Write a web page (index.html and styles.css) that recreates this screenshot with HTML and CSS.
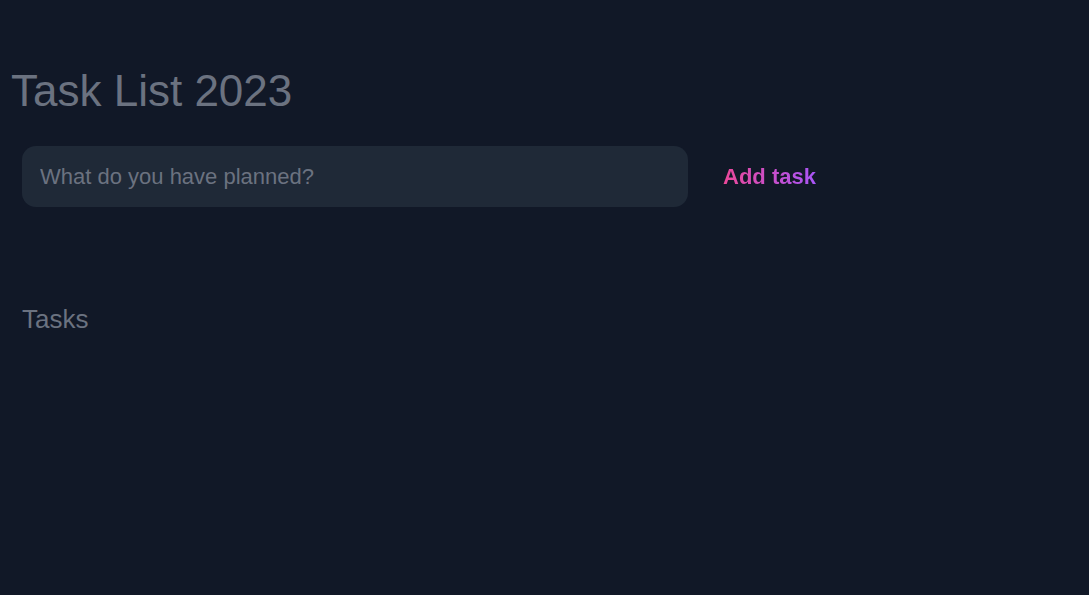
FILE: index.html
```html
<!DOCTYPE html>
<html lang="en">
<head>
<meta charset="utf-8">
<title>Task List 2023</title>
<link rel="stylesheet" href="styles.css">
</head>
<body>
<main class="app">
  <h1 class="title">Task List 2023</h1>
  <form class="new-task">
    <input class="task-input" type="text" placeholder="What do you have planned?">
    <button class="add-btn" type="button"><span class="grad">Add task</span></button>
  </form>
  <section class="tasks">
    <h2 class="tasks-title">Tasks</h2>
  </section>
</main>
</body>
</html>
```
FILE: styles.css
```css
* { box-sizing: border-box; }
html, body { margin: 0; padding: 0; background: #111827; height: 100%; }
body { font-family: "Liberation Sans", Arial, sans-serif; color: #6b7280; }
.app { padding-top: 67px; }
.title {
  margin: 0;
  padding-left: 11px;
  font-size: 44px;
  line-height: 48px;
  font-weight: 400;
  color: #6b7280;
}
.new-task {
  display: flex;
  align-items: center;
  margin: 31px 0 0 22px;
  gap: 35px;
}
.task-input {
  width: 666px;
  height: 61px;
  border: none;
  outline: none;
  border-radius: 14px;
  background: #1f2937;
  color: #d1d5db;
  padding: 0 18px;
  font-family: inherit;
  font-size: 22px;
}
.task-input::placeholder { color: #6b7280; }
.add-btn {
  background: none;
  border: none;
  padding: 0;
  font-family: inherit;
  font-size: 22px;
  font-weight: 700;
  line-height: 26px;
  cursor: pointer;
}
.grad {
  background: linear-gradient(90deg, #ec4899, #a855f7);
  -webkit-background-clip: text;
  background-clip: text;
  color: transparent;
}
.tasks { padding-left: 22px; margin-top: 97px; }
.tasks-title {
  margin: 0;
  font-size: 26px;
  line-height: 30px;
  font-weight: 400;
  color: #6b7280;
}
```
